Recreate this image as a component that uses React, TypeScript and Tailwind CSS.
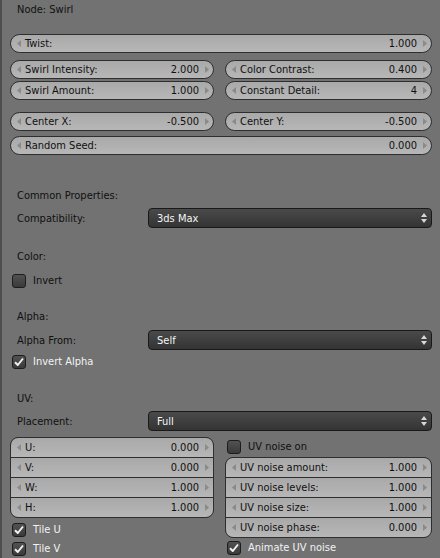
import clsx from "clsx";

function LeftArrow() {
  return (
    <svg width="4" height="7" viewBox="0 0 4 7" className="ml-[6px] shrink-0">
      <path d="M4 0 L0 3.5 L4 7 Z" fill="#8a8a8a" />
    </svg>
  );
}

function RightArrow() {
  return (
    <svg width="4" height="7" viewBox="0 0 4 7" className="ml-[6px] mr-[4px] shrink-0">
      <path d="M0 0 L4 3.5 L0 7 Z" fill="#8a8a8a" />
    </svg>
  );
}

function NumField({ label, value, className }: { label: string; value: string; className?: string }) {
  return (
    <div
      className={clsx(
        "flex h-[19px] items-center bg-linear-to-b from-[#a9a9a9] to-[#b7b7b7] text-[#101010]",
        className
      )}
    >
      <LeftArrow />
      <span className="ml-[4px] whitespace-nowrap">{label}</span>
      <span className="ml-auto whitespace-nowrap">{value}</span>
      <RightArrow />
    </div>
  );
}

function Pill({ label, value }: { label: string; value: string }) {
  return <NumField label={label} value={value} className="rounded-full border border-[#2e2e2e]" />;
}

function Group({ rows }: { rows: [string, string][] }) {
  return (
    <div className="flex flex-col overflow-hidden rounded-[8px] border border-[#2e2e2e] bg-[#2e2e2e] gap-px">
      {rows.map(([l, v]) => (
        <NumField key={l} label={l} value={v} />
      ))}
    </div>
  );
}

function Checkbox({ label, checked }: { label: string; checked?: boolean }) {
  return (
    <div className="flex h-[19px] items-center">
      <div className="ml-[2px] flex h-[14px] w-[14px] items-center justify-center rounded-[3px] border border-[#1c1c1c] bg-linear-to-b from-[#525252] to-[#3a3a3a]">
        {checked && (
          <svg width="12" height="12" viewBox="0 0 12 12">
            <path d="M2 6.2 L4.8 9 L10 2.5" stroke="#f0f0f0" strokeWidth="2" fill="none" strokeLinejoin="round" />
          </svg>
        )}
      </div>
      <span className={clsx("ml-[7px]", checked ? "text-[#f2f2f2]" : "text-[#101010]")}>{label}</span>
    </div>
  );
}

function Dropdown({ label, value }: { label: string; value: string }) {
  return (
    <div className="flex h-[20px] items-center">
      <span className="w-[138px] pl-[7px] text-[#101010]">{label}</span>
      <div className="flex h-[20px] flex-1 items-center rounded-[4px] border border-[#191919] bg-linear-to-b from-[#4a4a4a] to-[#343434] text-[#f4f4f4]">
        <span className="ml-[8px]">{value}</span>
        <svg width="6" height="12" viewBox="0 0 6 12" className="ml-auto mr-[4px]">
          <path d="M3 1 L6 5 L0 5 Z" fill="#d8d8d8" />
          <path d="M0 7 L6 7 L3 11 Z" fill="#d8d8d8" />
        </svg>
      </div>
    </div>
  );
}

function Heading({ children }: { children: string }) {
  return <div className="flex h-[19px] items-center pl-[7px] text-[#101010]">{children}</div>;
}

export default function App() {
  return (
    <div className="h-[558px] w-[440px] overflow-hidden border-l-2 border-[#4e4e4e] bg-[#727272] pl-[8px] pr-[8px] font-['DejaVu_Sans_Condensed','DejaVu_Sans',sans-serif] text-[11px] leading-none">
      <Heading>Node: Swirl</Heading>

      <div className="mt-[15px]">
        <Pill label="Twist:" value="1.000" />
      </div>
      <div className="mt-[7px] grid grid-cols-[204px_1fr] gap-x-[11px] gap-y-[2px]">
        <Pill label="Swirl Intensity:" value="2.000" />
        <Pill label="Color Contrast:" value="0.400" />
        <Pill label="Swirl Amount:" value="1.000" />
        <Pill label="Constant Detail:" value="4" />
      </div>
      <div className="mt-[12px] grid grid-cols-[204px_1fr] gap-x-[11px]">
        <Pill label="Center X:" value="-0.500" />
        <Pill label="Center Y:" value="-0.500" />
      </div>
      <div className="mt-[5px]">
        <Pill label="Random Seed:" value="0.000" />
      </div>

      <div className="mt-[31px]">
        <Heading>Common Properties:</Heading>
      </div>
      <div className="mt-[3px]">
        <Dropdown label="Compatibility:" value="3ds Max" />
      </div>

      <div className="mt-[19px]">
        <Heading>Color:</Heading>
      </div>
      <div className="mt-[5px]">
        <Checkbox label="Invert" />
      </div>

      <div className="mt-[17px]">
        <Heading>Alpha:</Heading>
      </div>
      <div className="mt-[4px]">
        <Dropdown label="Alpha From:" value="Self" />
      </div>
      <div className="mt-[2px]">
        <Checkbox label="Invert Alpha" checked />
      </div>

      <div className="mt-[18px]">
        <Heading>UV:</Heading>
      </div>
      <div className="mt-[3px]">
        <Dropdown label="Placement:" value="Full" />
      </div>

      <div className="mt-[6px] grid grid-cols-[204px_1fr] gap-x-[11px]">
        <div className="flex flex-col">
          <Group
            rows={[
              ["U:", "0.000"],
              ["V:", "0.000"],
              ["W:", "1.000"],
              ["H:", "1.000"],
            ]}
          />
          <div className="mt-[2px]">
            <Checkbox label="Tile U" checked />
          </div>
          <Checkbox label="Tile V" checked />
        </div>
        <div className="flex flex-col">
          <Checkbox label="UV noise on" />
          <div className="mt-[1px]">
            <Group
              rows={[
                ["UV noise amount:", "1.000"],
                ["UV noise levels:", "1.000"],
                ["UV noise size:", "1.000"],
                ["UV noise phase:", "0.000"],
              ]}
            />
          </div>
          <Checkbox label="Animate UV noise" checked />
        </div>
      </div>
    </div>
  );
}
